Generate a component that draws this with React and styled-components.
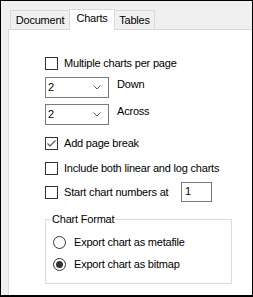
import React from "react";
import styled, { createGlobalStyle } from "styled-components";

const Global = createGlobalStyle`
  html, body { margin: 0; padding: 0; background: #ffffff; }
  * { box-sizing: border-box; }
  body { font-family: "Liberation Sans", Arial, sans-serif; font-size: 11px; letter-spacing: -0.2px; color: #000; }
`;

const Frame = styled.div`
  width: 253px;
  height: 297px;
  border: 1px solid #000;
  border-bottom-width: 2px;
  background: #f0f0f0;
  display: flex;
  flex-direction: column;
  overflow: hidden;
`;

const TabStrip = styled.div`
  height: 28px;
  padding-left: 9px;
  display: flex;
  align-items: flex-end;
  position: relative;
  z-index: 2;
`;

const Tab = styled.div`
  width: ${(p) => p.$w}px;
  margin-left: ${(p) => (p.$first ? 0 : -1)}px;
  height: ${(p) => (p.$active ? 21 : 19)}px;
  margin-bottom: ${(p) => (p.$active ? -1 : 0)}px;
  border: 1px solid #d9d9d9;
  border-bottom: none;
  background: ${(p) => (p.$active ? "#ffffff" : "#f0f0f0")};
  text-align: center;
  line-height: 13px;
  padding-top: ${(p) => (p.$active ? 2 : 3)}px;
  position: relative;
  z-index: ${(p) => (p.$active ? 2 : 1)};
`;

const Panel = styled.div`
  flex: 1;
  margin-left: 7px;
  border-top: 1px solid #d9d9d9;
  border-left: 1px solid #d9d9d9;
  background: #ffffff;
  padding: 27px 0 0 36px;
  display: flex;
  flex-direction: column;
  align-items: flex-start;
`;

const Row = styled.div`
  display: flex;
  align-items: ${(p) => p.$align || "center"};
  margin-top: ${(p) => p.$mt || 0}px;
  line-height: 13px;
`;

const Box = styled.span`
  width: 13px;
  height: 13px;
  border: 1px solid #333333;
  background: #fff;
  flex: none;
  display: flex;
  align-items: center;
  justify-content: center;
  margin-right: 6px;
`;

const Label = styled.span`
  white-space: nowrap;
  ${(p) => (p.$w ? `width: ${p.$w}px;` : "")}
`;

const Combo = styled.div`
  width: 64px;
  height: 21px;
  border: 1px solid #7a7a7a;
  background: #fff;
  display: flex;
  align-items: center;
  justify-content: space-between;
  padding: 0 7px 0 2px;
  margin-right: 8px;
  line-height: 13px;
`;

const SideLabel = styled.span`
  align-self: flex-start;
  margin-top: 1px;
`;

const TextBox = styled.div`
  width: 31px;
  height: 20px;
  border: 1px solid #7a7a7a;
  background: #fff;
  padding: 2px 0 0 3px;
  line-height: 13px;
`;

const Group = styled.fieldset`
  margin: ${(p) => p.$mt}px 0 0 0;
  width: 187px;
  height: 71px;
  border: 1px solid #dcdcdc;
  padding: 4px 0 0 7px;
  display: flex;
  flex-direction: column;
`;

const Legend = styled.legend`
  padding: 0 1px;
  margin-left: -2px;
  line-height: 13px;
`;

const Radio = styled.span`
  width: 13px;
  height: 13px;
  border: 1px solid #333333;
  border-radius: 50%;
  background: #fff;
  flex: none;
  display: flex;
  align-items: center;
  justify-content: center;
  margin-right: 8px;
`;

const Dot = styled.span`
  width: 7px;
  height: 7px;
  border-radius: 50%;
  background: #333333;
`;

const Check = () => (
  <svg width="11" height="11" viewBox="0 0 11 11">
    <polyline points="1.5,5.5 4,8 9.5,2.5" fill="none" stroke="#555" strokeWidth="1.2" />
  </svg>
);

const Chevron = () => (
  <svg width="8" height="5" viewBox="0 0 8 5">
    <polyline points="0.5,0.5 4,4 7.5,0.5" fill="none" stroke="#606060" strokeWidth="1" />
  </svg>
);

const CheckBox = ({ checked }) => <Box>{checked ? <Check /> : null}</Box>;

export default function App() {
  return (
    <>
      <Global />
      <Frame>
        <TabStrip>
          <Tab $w={60} $first>Document</Tab>
          <Tab $w={46} $active>Charts</Tab>
          <Tab $w={41}>Tables</Tab>
        </TabStrip>
        <Panel>
          <Row>
            <CheckBox />
            <Label>Multiple charts per page</Label>
          </Row>
          <Row $mt={7} $align="flex-start">
            <Combo>
              <span>2</span>
              <Chevron />
            </Combo>
            <SideLabel>Down</SideLabel>
          </Row>
          <Row $mt={6} $align="flex-start">
            <Combo>
              <span>2</span>
              <Chevron />
            </Combo>
            <SideLabel>Across</SideLabel>
          </Row>
          <Row $mt={12}>
            <CheckBox checked />
            <Label>Add page break</Label>
          </Row>
          <Row $mt={12}>
            <CheckBox />
            <Label>Include both linear and log charts</Label>
          </Row>
          <Row $mt={7}>
            <CheckBox />
            <Label $w={117}>Start chart numbers at</Label>
            <TextBox>1</TextBox>
          </Row>
          <Group $mt={11}>
            <Legend>Chart Format</Legend>
            <Row $mt={6}>
              <Radio />
              <Label>Export chart as metafile</Label>
            </Row>
            <Row $mt={9}>
              <Radio>
                <Dot />
              </Radio>
              <Label>Export chart as bitmap</Label>
            </Row>
          </Group>
        </Panel>
      </Frame>
    </>
  );
}
